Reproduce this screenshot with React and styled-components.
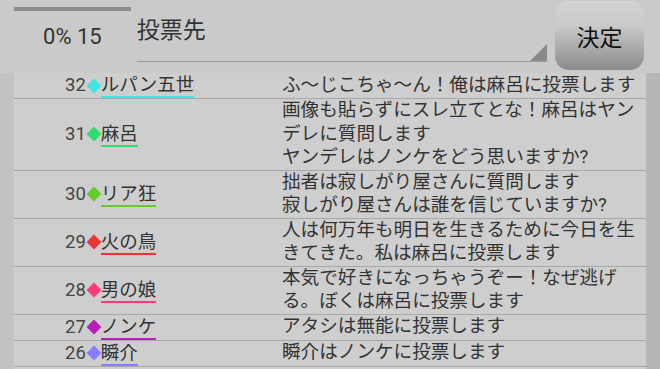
import React from "react";
import styled, { createGlobalStyle } from "styled-components";

const GlobalStyle = createGlobalStyle`
  html, body {
    margin: 0;
    padding: 0;
    height: 100%;
  }
  body {
    font-family: Roboto, "Noto Sans CJK JP", sans-serif;
    color: #333;
    background: linear-gradient(to right, #c2c2c2 0%, #c9c9c9 30%, #c6c6c6 75%, #b5b5b5 100%);
    overflow: hidden;
  }
`;

const posts = [
  { no: 32, name: "ルパン五世", color: "#3ee6e6", lines: ["ふ～じこちゃ～ん！俺は麻呂に投票します"] },
  {
    no: 31,
    name: "麻呂",
    color: "#2fdc6e",
    lines: ["画像も貼らずにスレ立てとな！麻呂はヤン", "デレに質問します", "ヤンデレはノンケをどう思いますか?"],
  },
  { no: 30, name: "リア狂", color: "#66c92c", lines: ["拙者は寂しがり屋さんに質問します", "寂しがり屋さんは誰を信じていますか?"] },
  { no: 29, name: "火の鳥", color: "#ee3535", lines: ["人は何万年も明日を生きるために今日を生", "きてきた。私は麻呂に投票します"] },
  { no: 28, name: "男の娘", color: "#ff3a7a", lines: ["本気で好きになっちゃうぞー！なぜ逃げ", "る。ぼくは麻呂に投票します"] },
  { no: 27, name: "ノンケ", color: "#b61fb8", lines: ["アタシは無能に投票します"] },
  { no: 26, name: "瞬介", color: "#8a7cff", lines: ["瞬介はノンケに投票します"] },
];

const App = () => {
  return (
    <Page>
      <GlobalStyle />
      <Header>
        <Status>
          <Progress />
          <Count>0% 15</Count>
        </Status>
        <Target>
          <TargetLabel>投票先</TargetLabel>
          <Corner />
        </Target>
        <Decide>決定</Decide>
      </Header>
      <List>
        {posts.map((p) => (
          <Row key={p.no}>
            <Who>
              <No>{p.no}</No>
              <Diamond $color={p.color} />
              <Name $color={p.color}>{p.name}</Name>
            </Who>
            <Message>
              {p.lines.map((l, i) => (
                <div key={i}>{l}</div>
              ))}
            </Message>
          </Row>
        ))}
      </List>
    </Page>
  );
};

const Page = styled.div`
  height: 100vh;
  display: flex;
  flex-direction: column;
`;

const Header = styled.header`
  height: 73px;
  flex-shrink: 0;
  display: flex;
  align-items: stretch;
  padding: 0 16px 0 14px;
  background: #cacaca;
`;

const Status = styled.div`
  width: 117px;
  display: flex;
  flex-direction: column;
  padding-top: 7px;
`;

const Progress = styled.div`
  height: 4px;
  background: #8c8c8c;
`;

const Count = styled.div`
  margin-top: 12px;
  text-align: center;
  font-size: 22px;
  line-height: 28px;
  color: #333;
`;

const Target = styled.div`
  position: relative;
  width: 411px;
  margin: 0 8px 11px 6px;
  border-bottom: 1px solid #9a9a9a;
  padding-top: 15px;
`;

const TargetLabel = styled.div`
  font-size: 23px;
  line-height: 32px;
  color: #333;
`;

const Corner = styled.div`
  position: absolute;
  right: 0;
  bottom: 0;
  width: 0;
  height: 0;
  border-style: solid;
  border-width: 0 0 17px 17px;
  border-color: transparent transparent #8a8a8a transparent;
`;

const Decide = styled.button`
  width: 89px;
  height: 69px;
  margin-top: 1px;
  border: none;
  border-radius: 14px;
  background: linear-gradient(to bottom, #d4d4d4 0%, #cacaca 35%, #8b8b8b 100%);
  font-family: Roboto, "Noto Sans CJK JP", sans-serif;
  font-size: 23px;
  color: #111;
  padding: 0;
`;

const List = styled.div`
  flex: 1;
  margin: 0 14px;
  background: #cecece;
  overflow: hidden;
`;

const Row = styled.div`
  display: flex;
  align-items: center;
  border-bottom: 1px solid #a8a8a8;
`;

const Who = styled.div`
  width: 268px;
  flex-shrink: 0;
  display: flex;
  align-items: center;
  padding-left: 51px;
  box-sizing: border-box;
  font-size: 18.5px;
  line-height: 23px;
`;

const No = styled.span`
  color: #444;
`;

const Diamond = styled.span`
  width: 10px;
  height: 10px;
  margin: 0 2px 0 3px;
  background: ${({ $color }) => $color};
  transform: rotate(45deg) scale(1.05);
`;

const Name = styled.span`
  color: #333;
  border-bottom: 2px solid ${({ $color }) => $color};
  line-height: 21px;
  margin-top: 2px;
`;

const Message = styled.div`
  flex: 1;
  font-size: 18.6px;
  line-height: 23.5px;
  color: #333;
  white-space: nowrap;
`;

export default App;
